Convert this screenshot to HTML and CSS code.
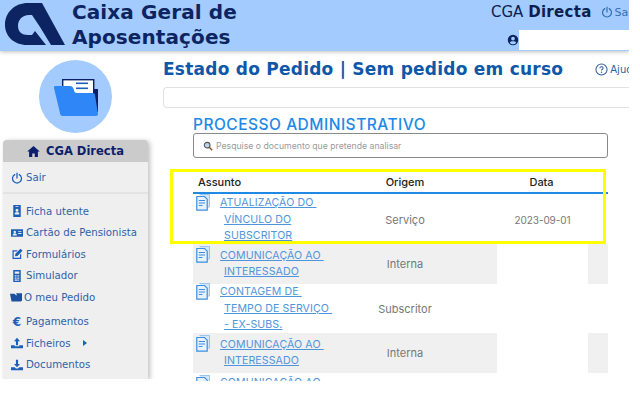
FILE: index.html
```html
<!DOCTYPE html>
<html lang="pt">
<head>
<meta charset="UTF-8" />
<meta name="viewport" content="width=device-width, initial-scale=1.0">
<title>CGA Directa</title>
<link rel="stylesheet" href="styles.css">
</head>
<body>
<div class="page">

  <!-- Header -->
  <header class="top">
    <svg class="logo" viewBox="0 0 66 48">
      <path fill-rule="evenodd" d="M28 3 H42 L65 45 H27 C14 45 5 36 5 25 C5 12 15 3 28 3 Z M29 15 C22 15 18 20 18 26 C18 32 22 35 28 35 H32 L35 31 L46 45 H51 L40 27 L32 15 Z" fill="#0c2461"/>
    </svg>
    <div class="brand">Caixa Geral de<br>Aposentações</div>
    <div class="top-right">
      <div class="top-line">
        <span class="app-name">CGA <b>Directa</b></span>
        <span class="top-exit">
          <svg class="ico" viewBox="0 0 16 16"><path d="M5 3.5 A6 6 0 1 0 11 3.5 M8 1.5 V8" fill="none" stroke="currentColor" stroke-width="1.6" stroke-linecap="round"/></svg>
          Sair
        </span>
      </div>
      <div class="user-line">
        <svg class="user-ico" viewBox="0 0 16 16"><path fill-rule="evenodd" d="M8 1 A7 7 0 1 1 8 15 A7 7 0 1 1 8 1 Z M8 3.5 A2.5 2.5 0 1 0 8 8.5 A2.5 2.5 0 1 0 8 3.5 Z M3.8 11.6 C5 13 6.4 13.6 8 13.6 C9.6 13.6 11 13 12.2 11.6 C11.6 10.2 10.4 9.6 8 9.6 C5.6 9.6 4.4 10.2 3.8 11.6 Z" fill="#0c2461"/></svg>
        <div class="user-box"></div>
      </div>
    </div>
  </header>

  <div class="body-wrap">
    <!-- Sidebar -->
    <aside class="side">
      <div class="avatar">
        <svg viewBox="0 0 44 38" class="avatar-ico">
          <rect x="8.7" y="1.7" width="31" height="26" fill="#fff" stroke="#0c1f6b" stroke-width="1.4"/>
          <path d="M40 11 H44 V34 H40 Z" fill="#0c1f6b"/>
          <rect x="22" y="4.5" width="12" height="1.6" fill="#1c5fb8"/>
          <rect x="22" y="9.5" width="12" height="1.6" fill="#1c5fb8"/>
          <path d="M1 8 H16 C18 8 19 9 19.6 11 C20.2 14 21 15 23 15 H39 C40 15 41 16 41 17 L44 36 C44 37 43 38 42 38 H9 C7 38 6 37 6 35 L0 10 C0 9 0 8 1 8 Z" fill="#2f86f6"/>
        </svg>
      </div>
      <nav class="menu">
        <div class="menu-head">
          <svg class="home-ico" viewBox="0 0 16 14"><path d="M8 0 L16 7 H13.6 V14 H9.6 V9.5 H6.4 V14 H2.4 V7 H0 Z" fill="#0c1f6b"/></svg>
          CGA Directa
        </div>
        <a class="menu-item exit">
          <svg class="ico" viewBox="0 0 16 16"><path d="M5 3.5 A6 6 0 1 0 11 3.5 M8 1.5 V8" fill="none" stroke="currentColor" stroke-width="1.7" stroke-linecap="round"/></svg>
          Sair
        </a>
        <hr class="menu-sep">
        <a class="menu-item">
          <svg class="ico" viewBox="0 0 16 16"><path fill-rule="evenodd" d="M3 0 H13 V16 H3 Z M8 5 A2 2 0 1 0 8 9 A2 2 0 1 0 8 5 Z M5 12.5 H11 V11 C11 10 10 9.8 8 9.8 C6 9.8 5 10 5 11 Z M6 1.6 V2.8 H10 V1.6 Z" fill="currentColor"/></svg>
          Ficha utente
        </a>
        <a class="menu-item">
          <svg class="ico" viewBox="0 0 16 16"><path fill-rule="evenodd" d="M0 3 H16 V13 H0 Z M5 5 A1.6 1.6 0 1 0 5 8.2 A1.6 1.6 0 1 0 5 5 Z M2.2 11.4 H7.8 C7.8 9.6 7 8.8 5 8.8 C3 8.8 2.2 9.6 2.2 11.4 Z M9.5 5.5 V6.7 H14 V5.5 Z M9.5 8 V9.2 H14 V8 Z" fill="currentColor"/></svg>
          Cartão de Pensionista
        </a>
        <a class="menu-item">
          <svg class="ico" viewBox="0 0 16 16"><path d="M2.5 3 H9 L7.5 4.6 H3.6 V13 H12 V9 L13.6 7.4 V14.6 H2 V3 Z M12.6 1 L15.4 3.8 L8.6 10.6 L5.4 11 L5.8 7.8 Z" fill="currentColor"/></svg>
          Formulários
        </a>
        <a class="menu-item">
          <svg class="ico" viewBox="0 0 16 16"><path fill-rule="evenodd" d="M3 0 H13 V16 H3 Z M5 2 V5 H11 V2 Z M5 7 V8.6 H6.6 V7 Z M7.3 7 V8.6 H8.9 V7 Z M9.5 7 V8.6 H11 V7 Z M5 10 V11.6 H6.6 V10 Z M7.3 10 V11.6 H8.9 V10 Z M9.5 10 V11.6 H11 V10 Z M5 12.8 V14.2 H8.9 V12.8 Z M9.5 12.8 V14.2 H11 V12.8 Z" fill="currentColor"/></svg>
          Simulador
        </a>
        <a class="menu-item pedido">
          <svg class="ico" viewBox="0 0 16 16"><path d="M8 3 H16 V13 L14 14 Z M0 3.5 H6 L8 5.5 H13 L14.6 14 H2 Z" fill="#1c4f9c"/></svg>
          O meu Pedido
        </a>
        <a class="menu-item pay">
          <span class="ico euro">€</span>
          Pagamentos
        </a>
        <a class="menu-item">
          <svg class="ico" viewBox="0 0 16 16"><path d="M8 1 L12 5.5 H9.4 V11 H6.6 V5.5 H4 Z M0 11 H5 V12.4 H11 V11 H16 V15 H0 Z" fill="currentColor"/></svg>
          Ficheiros
          <span class="caret"></span>
        </a>
        <a class="menu-item">
          <svg class="ico" viewBox="0 0 16 16"><path d="M6.6 1 H9.4 V6.5 H12 L8 11 L4 6.5 H6.6 Z M0 11 H5 L6.5 12.6 H9.5 L11 11 H16 V15 H0 Z" fill="currentColor"/></svg>
          Documentos
        </a>
      </nav>
    </aside>

    <!-- Main content -->
    <main class="main">
      <div class="title-row">
        <h1>Estado do Pedido | Sem pedido em curso</h1>
        <span class="help">
          <svg class="help-ico" viewBox="0 0 14 14"><circle cx="7" cy="7" r="6" fill="none" stroke="currentColor" stroke-width="1.1"/><path d="M5.2 5.6 C5.2 3.4 8.8 3.4 8.8 5.4 C8.8 6.8 7 6.6 7 8.2" fill="none" stroke="currentColor" stroke-width="1.1"/><circle cx="7" cy="10" r=".8" fill="currentColor"/></svg>
          Ajuda
        </span>
      </div>
      <div class="state-box"></div>

      <section class="process">
        <h2>PROCESSO ADMINISTRATIVO</h2>
        <div class="search">
          <svg class="search-ico" viewBox="0 0 12 12"><circle cx="5" cy="5" r="3.4" fill="#b9d4ee" stroke="#555" stroke-width="1.3"/><path d="M7.6 7.6 L11 11" stroke="#8a5a20" stroke-width="1.8"/></svg>
          <span>Pesquise o documento que pretende analisar</span>
        </div>

        <div class="table">
          <div class="row head">
            <div class="col-subject">Assunto</div>
            <div class="col-origin">Origem</div>
            <div class="col-date">Data</div>
            <div></div>
          </div>

          <div class="row tall">
            <div class="col-subject">
              <svg class="doc" viewBox="0 0 14 17"><use href="#doc-ico"/></svg>
              <a>ATUALIZAÇÃO DO&nbsp;<br><i></i>VÍNCULO DO<br><i></i>SUBSCRITOR</a>
            </div>
            <div class="col-origin">Serviço</div>
            <div class="col-date">2023-09-01</div>
            <div></div>
          </div>

          <div class="row alt">
            <div class="col-subject">
              <svg class="doc" viewBox="0 0 14 17"><use href="#doc-ico"/></svg>
              <a>COMUNICAÇÃO AO&nbsp;<br><i></i>INTERESSADO</a>
            </div>
            <div class="col-origin">Interna</div>
            <div class="col-date"></div>
            <div></div>
          </div>

          <div class="row tall">
            <div class="col-subject">
              <svg class="doc" viewBox="0 0 14 17"><use href="#doc-ico"/></svg>
              <a>CONTAGEM DE&nbsp;<br><i></i>TEMPO DE SERVIÇO&nbsp;<br><i></i>- EX-SUBS.</a>
            </div>
            <div class="col-origin">Subscritor</div>
            <div class="col-date"></div>
            <div></div>
          </div>

          <div class="row alt">
            <div class="col-subject">
              <svg class="doc" viewBox="0 0 14 17"><use href="#doc-ico"/></svg>
              <a>COMUNICAÇÃO AO&nbsp;<br><i></i>INTERESSADO</a>
            </div>
            <div class="col-origin">Interna</div>
            <div class="col-date"></div>
            <div></div>
          </div>

          <div class="row tall last">
            <div class="col-subject">
              <svg class="doc" viewBox="0 0 14 17"><use href="#doc-ico"/></svg>
              <a>COMUNICAÇÃO AO&nbsp;</a>
            </div>
          </div>
        </div>
      </section>

      <div class="highlight"></div>
    </main>
  </div>
</div>

<svg class="defs" width="0" height="0">
  <symbol id="doc-ico" viewBox="0 0 14 17">
    <path d="M3.5 0.5 H13.5 V13 H11" fill="#d4e6f8" stroke="#9cc4ec" stroke-width="1"/>
    <path d="M0.8 2.5 H8.5 L11.2 5.2 V16.2 H0.8 Z" fill="#e8f2fc" stroke="#3d8de0" stroke-width="1.2"/>
    <path d="M2.8 6.5 H9 M2.8 9 H9 M2.8 11.5 H6.5" stroke="#3d8de0" stroke-width="1.2"/>
  </symbol>
</svg>
</body>
</html>
```

FILE: styles.css
```css
* {
  box-sizing: border-box;
  margin: 0;
  padding: 0;
}
body {
  background: #fff;
  font-family: 'DejaVu Sans', sans-serif;
}
.defs {
  position: absolute;
}
.page {
  width: 629px;
  height: 381px;
  overflow: hidden;
}

/* Header */
.top {
  height: 51px;
  background: #a3cbfd;
  display: flex;
  box-shadow: 0 1px 4px rgba(0,0,0,0.25);
  position: relative;
  z-index: 2;
}
.logo {
  width: 66px;
  height: 48px;
  flex: none;
}
.brand {
  margin-left: 6px;
  font-size: 20px;
  line-height: 25px;
  font-weight: bold;
  color: #0c2461;
  letter-spacing: 0.1px;
}
.top-right {
  margin-left: auto;
  width: 138px;
  flex: none;
  overflow: hidden;
}
.top-line {
  display: flex;
  align-items: center;
  height: 24px;
  white-space: nowrap;
}
.app-name {
  font-size: 15px;
  color: #0c1f4f;
}
.app-name b {
  letter-spacing: 0.3px;
}
.top-exit {
  margin-left: 9px;
  font-size: 11px;
  color: #2f6fb8;
  display: flex;
  align-items: center;
  gap: 2px;
}
.user-line {
  display: flex;
  align-items: center;
  height: 20px;
  margin-top: 6px;
  margin-left: 16px;
}
.user-ico {
  width: 12px;
  height: 12px;
  flex: none;
}
.user-box {
  flex: 1;
  height: 20px;
  background: #fff;
}
.ico {
  width: 12px;
  height: 12px;
  flex: none;
}

/* Sidebar */
.body-wrap {
  display: flex;
}
.side {
  width: 145px;
  flex: none;
  margin-left: 3px;
}
.avatar {
  width: 73px;
  height: 73px;
  margin: 9px 0 7px 36px;
  border-radius: 50%;
  background: #a3cbfd;
  display: flex;
  align-items: center;
  justify-content: center;
}
.avatar-ico {
  width: 44px;
  height: 38px;
}
.menu {
  background: #efefef;
  height: 239px;
  border-radius: 4px 4px 0 0;
  box-shadow: 2px 1px 5px rgba(0,0,0,0.25);
  clip-path: inset(-8px -8px 0 -8px);
}
.menu-head {
  height: 22px;
  background: #cbcbcb;
  border-radius: 4px 4px 0 0;
  display: flex;
  align-items: center;
  justify-content: center;
  gap: 6px;
  font-size: 11.5px;
  font-weight: bold;
  color: #0c1f6b;
}
.home-ico {
  width: 13px;
  height: 11px;
}
.menu-item {
  height: 21.5px;
  display: flex;
  align-items: center;
  gap: 3px;
  padding-left: 8px;
  font-size: 10.2px;
  color: #2f5fa8;
}
.menu-item .ico {
  color: #1c5fb8;
}
.exit {
  margin-top: 5px;
}
.menu-sep {
  border: none;
  border-top: 2px solid #e3e3e3;
  margin: 3px 0 7px;
}
.pedido {
  padding-left: 7px;
  gap: 2px;
}
.pay {
  margin-top: 3px;
}
.euro {
  font-size: 12px;
  line-height: 13px;
  text-align: center;
  font-weight: bold;
}
.caret {
  margin-left: 9px;
  border-left: 4px solid #1c5fb8;
  border-top: 3.5px solid transparent;
  border-bottom: 3.5px solid transparent;
}

/* Main */
.main {
  flex: 1;
  min-width: 0;
  margin-left: 15px;
  position: relative;
}
.title-row {
  height: 36px;
  display: flex;
  align-items: center;
  white-space: nowrap;
}
h1 {
  font-size: 17px;
  font-weight: bold;
  color: #0f57a8;
  letter-spacing: 0.24px;
}
.help {
  margin-left: 32px;
  display: flex;
  align-items: center;
  gap: 2px;
  font-size: 10px;
  color: #2f5f9e;
}
.help-ico {
  width: 13px;
  height: 13px;
}
.state-box {
  height: 21px;
  border: 1px solid #e2e2e2;
  border-right: none;
  border-radius: 4px 0 0 4px;
}
.process {
  margin: 8px 21px 0 30px;
}
h2 {
  font-family: 'Inter', sans-serif;
  font-size: 15.5px;
  font-weight: 500;
  line-height: 17px;
  color: #2089e6;
  letter-spacing: 0.5px;
}
.search {
  height: 25px;
  margin-bottom: 11px;
  border: 1px solid #8a8a8a;
  border-radius: 3px;
  display: flex;
  align-items: center;
  gap: 3px;
  padding-left: 9px;
  font-family: 'Inter', sans-serif;
  font-size: 8.7px;
  color: #9a9a9a;
}
.search-ico {
  width: 10px;
  height: 10px;
}
.table {
  font-family: 'Inter', sans-serif;
  font-size: 11px;
  color: #777;
}
.row {
  display: grid;
  grid-template-columns: 140px 164px 91px 21px;
  align-items: center;
}
.row.head {
  height: 25px;
  margin-bottom: 1px;
  border-bottom: 2px solid #2089e6;
  color: #222;
  font-weight: 500;
  padding-top: 2px;
}
.head .col-subject {
  padding-left: 5px;
  align-items: center;
}
.row.tall {
  height: 49px;
}
.row.alt {
  height: 40px;
  background: #f0f0f0;
}
.col-subject {
  display: flex;
  align-items: flex-start;
  white-space: nowrap;
  height: 100%;
}
.col-origin {
  text-align: center;
  padding-right: 20px;
}
.col-date {
  text-align: center;
  align-self: stretch;
  display: flex;
  align-items: center;
  justify-content: center;
  font-size: 10px;
  letter-spacing: -0.1px;
}
.head .col-date {
  font-size: 11px;
  padding-right: 2px;
}
.alt .col-date {
  background: #fff;
}
.doc {
  width: 14px;
  height: 17px;
  margin: -1px 0 0 3px;
  flex: none;
}
.alt .doc {
  margin-top: 2px;
}
.last .doc {
  margin-top: 2px;
}
.col-subject a {
  margin-left: 10px;
  font-size: 10.6px;
  line-height: 16.5px;
  color: #4f94dc;
  text-decoration: underline;
  letter-spacing: 0.1px;
}
.alt .col-subject a {
  margin-top: 3.5px;
}
.last .col-subject a {
  margin-top: 2px;
}
.col-subject a i {
  display: inline-block;
  width: 4px;
}

/* Yellow marker drawn over the screenshot */
.highlight {
  position: absolute;
  left: 7px;
  top: 118px;
  width: 436px;
  height: 75px;
  border: 3px solid #ffff00;
}
```
